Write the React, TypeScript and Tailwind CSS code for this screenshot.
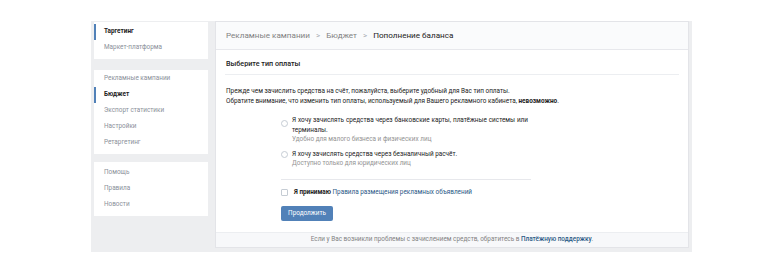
const font = { fontFamily: 'Roboto, "Liberation Sans", Arial, sans-serif' }

const SideItem = ({ label, active }: { label: string; active?: boolean }) => (
  <div
    className={`h-[16px] flex items-center pl-[8px] text-[6.4px] border-l-2 ${
      active ? 'border-[#5181b8] text-[#222] font-bold' : 'border-transparent text-[#8a8f99]'
    }`}
  >
    {label}
  </div>
)

const Radio = () => (
  <div className="w-[7px] h-[7px] rounded-full border border-[#c5ccd4] bg-white shrink-0" />
)

export default function App() {
  return (
    <div className="w-[781px] h-[266px] bg-white pt-[21px] pl-[91px]" style={font}>
      <div className="w-[601px] h-[231px] bg-[#edeef0] flex px-[3px] gap-[7px]">
        {/* Sidebar */}
        <div className="w-[114px] flex flex-col pt-[1px]">
          <div className="bg-white pt-[2px] pb-[3px]">
            <SideItem label="Таргетинг" active />
            <SideItem label="Маркет-платформа" />
          </div>
          <div className="bg-white mt-[11px] pt-[1px] pb-[3px]">
            <SideItem label="Рекламные кампании" />
            <SideItem label="Бюджет" active />
            <SideItem label="Экспорт статистики" />
            <SideItem label="Настройки" />
            <SideItem label="Ретаргетинг" />
          </div>
          <div className="bg-white mt-[8px] pt-[3px] pb-[3px]">
            <SideItem label="Помощь" />
            <SideItem label="Правила" />
            <SideItem label="Новости" />
          </div>
        </div>

        {/* Main panel */}
        <div className="w-[474px] h-[227px] bg-white border border-[#e3e4e8] flex flex-col">
          <div className="h-[28px] shrink-0 bg-[#fafbfc] border-b border-[#e7e8ec] flex items-center px-[10px] text-[8.1px] text-[#828282]">
            <span>Рекламные кампании</span>
            <span className="mx-[6px] text-[#a8adb3]">&gt;</span>
            <span>Бюджет</span>
            <span className="mx-[6px] text-[#a8adb3]">&gt;</span>
            <span className="text-[#222]">Пополнение баланса</span>
          </div>

          <div className="mx-[9px] h-[25px] pt-[4px] border-b border-[#eceef1] flex items-center pl-[1px] text-[7.2px] font-medium text-[#222]">
            Выберите тип оплаты
          </div>

          <div className="px-[10px] pt-[12px] text-[6.4px] leading-[9.5px] text-[#222]">
            <div>Прежде чем зачислить средства на счёт, пожалуйста, выберите удобный для Вас тип оплаты.</div>
            <div>
              Обратите внимание, что изменить тип оплаты, используемый для Вашего рекламного кабинета,{' '}
              <b>невозможно</b>.
            </div>
          </div>

          <div className="ml-[65px] w-[250px] text-[6.4px] leading-[9.5px]">
            <div className="mt-[10px] flex gap-[4px]">
              <div className="pt-[4px]">
                <Radio />
              </div>
              <div>
                <div className="text-[#222] w-[236px] [text-align-last:justify]">
                  Я хочу зачислять средства через банковские карты, платёжные системы или
                </div>
                <div className="text-[#222]">терминалы.</div>
                <div className="text-[#939393]">Удобно для малого бизнеса и физических лиц</div>
              </div>
            </div>
            <div className="mt-[5px] flex gap-[4px]">
              <div className="pt-[1px]">
                <Radio />
              </div>
              <div>
                <div className="text-[#222]">Я хочу зачислять средства через безналичный расчёт.</div>
                <div className="text-[#939393]">Доступно только для юридических лиц</div>
              </div>
            </div>

            <div className="mt-[10px] border-t border-[#e7e8ec]" />

            <div className="mt-[8px] flex items-center gap-[6px]">
              <div className="w-[7px] h-[7px] rounded-[1px] border border-[#c5ccd4] bg-white shrink-0" />
              <div>
                <b className="text-[#222]">Я принимаю</b>{' '}
                <span className="text-[#2a5885]">Правила размещения рекламных объявлений</span>
              </div>
            </div>

            <button className="mt-[9px] w-[52px] h-[15px] rounded-[2px] bg-[#5181b8] text-white text-[6.4px] flex items-center justify-center">
              Продолжить
            </button>
          </div>

          <div className="mt-auto h-[15px] shrink-0 bg-[#f7f8fa] border-t border-[#eceef1] flex items-center justify-center text-[6.4px] text-[#828282]">
            Если у Вас возникли проблемы с зачислением средств, обратитесь в&nbsp;
            <span className="text-[#2a5885] font-medium">Платёжную поддержку</span>.
          </div>
        </div>
      </div>
    </div>
  )
}
